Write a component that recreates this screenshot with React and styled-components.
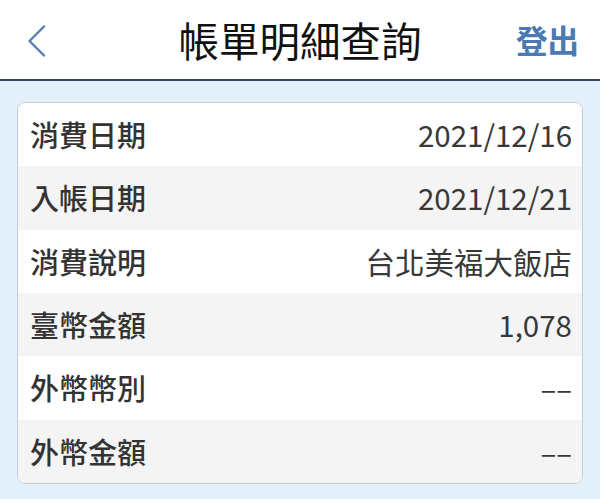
import React from 'react';
import styled, { createGlobalStyle } from 'styled-components';

const ROWS = [
  { label: '消費日期', value: '2021/12/16' },
  { label: '入帳日期', value: '2021/12/21' },
  { label: '消費說明', value: '台北美福大飯店' },
  { label: '臺幣金額', value: '1,078' },
  { label: '外幣幣別', value: '––' },
  { label: '外幣金額', value: '––' }
];

const GlobalStyle = createGlobalStyle`
  html, body {
    margin: 0;
    padding: 0;
    background: #e3f0fb;
    font-family: 'Noto Sans CJK TC', 'Noto Sans', sans-serif;
  }
`;

const App = () => (
  <React.Fragment>
    <GlobalStyle />
    <Page>
      <Header>
        <BackButton aria-label="back">
          <svg width="18" height="32" viewBox="0 0 18 32" fill="none">
            <path
              d="M16 1.5 L1.5 16 L16 30.5"
              stroke="#5580b3"
              strokeWidth="2.4"
              strokeLinecap="round"
              strokeLinejoin="round"
            />
          </svg>
        </BackButton>
        <Title>帳單明細查詢</Title>
        <Logout>登出</Logout>
      </Header>
      <Body>
        <Card>
          {ROWS.map(({ label, value }, i) => (
            <Row key={label} $shaded={i % 2 === 1}>
              <Label>{label}</Label>
              <Value>{value}</Value>
            </Row>
          ))}
        </Card>
      </Body>
    </Page>
  </React.Fragment>
);

const Page = styled.div`
  width: 600px;
  height: 499px;
  display: flex;
  flex-direction: column;
  background: #e3f0fb;
`;

const Header = styled.header`
  height: 79px;
  flex-shrink: 0;
  display: grid;
  grid-template-columns: 1fr auto 1fr;
  align-items: center;
  background: #fff;
  border-bottom: 2px solid #34465f;
`;

const BackButton = styled.div`
  justify-self: start;
  padding-left: 28px;
  padding-top: 2px;
  display: flex;
`;

const Title = styled.h1`
  margin: 0;
  font-size: 40.5px;
  font-weight: 400;
  color: #111;
  line-height: 1;
  padding-top: 2px;
`;

const Logout = styled.div`
  justify-self: end;
  padding-right: 21px;
  font-size: 31.5px;
  font-weight: 700;
  color: #4a7ab1;
  line-height: 1;
`;

const Body = styled.main`
  flex: 1;
  padding: 21px 17px 16px;
`;

const Card = styled.section`
  border: 1px solid #c7ccd1;
  border-radius: 8px;
  overflow: hidden;
  background: #fff;
`;

const Row = styled.div`
  height: 63.33px;
  display: flex;
  align-items: center;
  justify-content: space-between;
  padding: 0 10px 0 12px;
  background: ${(props) => (props.$shaded ? '#f4f4f4' : '#fff')};
`;

const Label = styled.span`
  font-size: 29px;
  font-weight: 500;
  color: #333;
  line-height: 1;
`;

const Value = styled.span`
  font-size: 29.5px;
  font-weight: 400;
  color: #383838;
  line-height: 1;
`;

export default App;
